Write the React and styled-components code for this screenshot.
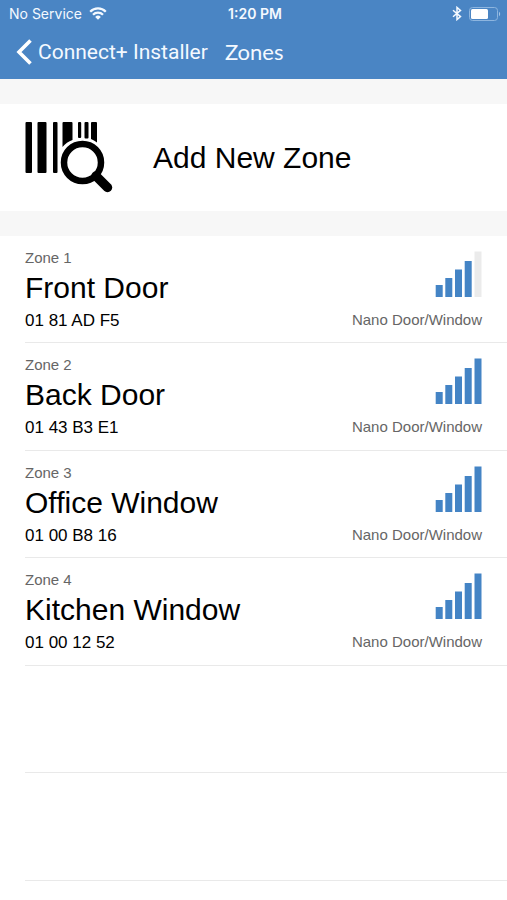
import React from 'react';
import styled, { createGlobalStyle } from 'styled-components';

const colours = {
  primary: '#4a85c4',
  bar: '#4484c5',
  barEmpty: '#ebebeb',
  band: '#f7f7f7',
  divider: '#e9e9e9',
  muted: '#666'
};

const zones = [
  { id: 1, name: 'Front Door', code: '01 81 AD F5', type: 'Nano Door/Window', signal: 4 },
  { id: 2, name: 'Back Door', code: '01 43 B3 E1', type: 'Nano Door/Window', signal: 5 },
  { id: 3, name: 'Office Window', code: '01 00 B8 16', type: 'Nano Door/Window', signal: 5 },
  { id: 4, name: 'Kitchen Window', code: '01 00 12 52', type: 'Nano Door/Window', signal: 5 }
];

const signalBars = [
  { x: 0.7, height: 12 },
  { x: 10.3, height: 19 },
  { x: 20, height: 27.5 },
  { x: 29.7, height: 36 },
  { x: 39.5, height: 45.5 }
];

const GlobalStyle = createGlobalStyle`
  * {
    box-sizing: border-box;
  }
  body {
    margin: 0;
    background: #fff;
    color: #000;
    font-family: 'Liberation Sans', Arial, sans-serif;
  }
`;

const Page = styled.div`
  min-height: 100vh;
  overflow: hidden;
`;

const Header = styled.header`
  background: ${colours.primary};
  color: #f4f9ff;
`;

const StatusBar = styled.div`
  display: grid;
  grid-template-columns: 1fr auto 1fr;
  align-items: center;
  height: 27px;
  padding: 0 6px 0 9px;
  font-family: Inter, sans-serif;
  font-size: 14px;
`;

const StatusGroup = styled.div`
  display: flex;
  align-items: center;
  justify-content: ${({ $end }) => ($end ? 'flex-end' : 'flex-start')};
  gap: 7px;
`;

const Clock = styled.time`
  font-size: 14px;
  font-weight: 600;
`;

const NavBar = styled.nav`
  display: flex;
  align-items: center;
  gap: 17px;
  height: 52px;
  padding: 0 16px 2px;
`;

const BackLink = styled.a`
  display: flex;
  align-items: center;
  gap: 5px;
  color: inherit;
  font-family: Roboto, sans-serif;
  font-size: 21px;
  line-height: 28px;
  text-decoration: none;
`;

const Title = styled.h1`
  margin: 0;
  font-family: Lato, sans-serif;
  font-size: 22px;
  font-weight: 400;
  line-height: 28px;
`;

const Band = styled.div`
  height: 25px;
  background: ${colours.band};
`;

const AddZoneButton = styled.button`
  display: flex;
  align-items: center;
  gap: 40px;
  width: 100%;
  height: 107px;
  padding: 0 25px;
  border: 0;
  background: #fff;
  color: inherit;
  font-family: inherit;
  font-size: 30px;
  line-height: 36px;
  cursor: pointer;
`;

const ZoneList = styled.ul`
  margin: 0;
  padding: 0 0 0 25px;
  list-style: none;
`;

const ZoneRow = styled.li`
  display: flex;
  justify-content: space-between;
  height: 107px;
  padding: 13px 25px 0 0;
  border-bottom: 1px solid ${colours.divider};
  &:nth-child(even) {
    height: 108px;
  }
`;

const ZoneColumn = styled.div`
  display: flex;
  flex-direction: column;
  align-items: ${({ $end }) => ($end ? 'flex-end' : 'flex-start')};
`;

const SmallText = styled.span`
  color: ${colours.muted};
  font-size: 15px;
  line-height: 18px;
`;

const ZoneName = styled.h2`
  margin: 3px 0;
  font-size: 30px;
  font-weight: 400;
  line-height: 36px;
`;

const ZoneCode = styled.span`
  font-size: 17px;
  line-height: 24px;
`;

const SignalIcon = styled.svg`
  margin: 2px 0 14px;
`;

const WifiIcon = () => (
  <svg width="18" height="13" viewBox="0 0 18 13" fill="none" stroke="currentColor" strokeWidth="2.3" aria-hidden="true">
    <path d="M1.2 4.7a11 11 0 0 1 15.6 0" />
    <path d="M4 7.7a7 7 0 0 1 10 0" />
    <path d="M9 12.8 6.2 9.9a4 4 0 0 1 5.6 0z" fill="currentColor" stroke="none" />
  </svg>
);

const BluetoothIcon = () => (
  <svg width="10" height="15" viewBox="0 0 10 15" fill="none" stroke="currentColor" strokeWidth="1.5" aria-hidden="true">
    <path d="M1 4.2 8.500 10.600 5 13.600V1.400L8.500 4.400 1 10.800" />
  </svg>
);

const BatteryIcon = () => (
  <svg width="32" height="14" viewBox="0 0 32 14" aria-hidden="true">
    <rect x="0.5" y="0.5" width="28" height="13" rx="3" fill="none" stroke="#8db5df" />
    <rect x="2" y="2" width="17" height="10" rx="1.5" fill="#fff" />
    <path d="M30 4.800a2.600 2.600 0 0 1 0 4.400z" fill="#a5c5e6" />
  </svg>
);

const BackIcon = () => (
  <svg width="17" height="26" viewBox="0 0 17 26" fill="none" stroke="#fff" strokeWidth="3.6" aria-hidden="true">
    <path d="M14.500 1.500 3 13l11.500 11.500" />
  </svg>
);

const BarcodeSearchIcon = () => (
  <svg width="88" height="71" viewBox="0 0 88 71" aria-hidden="true">
    <rect x="0.5" y="0" width="6.5" height="51" rx="1" />
    <rect x="12.5" y="0" width="9" height="51" rx="1" />
    <rect x="28" y="0" width="4.5" height="51" rx="1" />
    <path d="M38.5 0h8q1 0 1 1v17q-6 2-10 7V1q0-1 1-1z" />
    <rect x="53" y="0" width="3.2" height="16" rx="1" />
    <rect x="59.5" y="0" width="4" height="16.5" rx="1" />
    <path d="M67 0h4q1 0 1 1v19.500q-3-2.500-6-3.500V1q0-1 1-1z" />
    <circle cx="57.500" cy="40.500" r="18.500" fill="none" stroke="#000" strokeWidth="6.500" />
    <path d="M71 54 82.500 65.500" stroke="#000" strokeWidth="9.500" strokeLinecap="round" />
  </svg>
);

const Signal = ({ level }) => (
  <SignalIcon width="47" height="46" viewBox="0 0 47 46" role="img" aria-label={`Signal ${level} of 5`}>
    {signalBars.map(({ x, height }, i) => (
      <rect key={x} x={x} y={46 - height} width="7" height={height} fill={i < level ? colours.bar : colours.barEmpty} />
    ))}
  </SignalIcon>
);

const Zone = ({ zone }) => (
  <ZoneRow>
    <ZoneColumn>
      <SmallText>Zone {zone.id}</SmallText>
      <ZoneName>{zone.name}</ZoneName>
      <ZoneCode>{zone.code}</ZoneCode>
    </ZoneColumn>
    <ZoneColumn $end>
      <Signal level={zone.signal} />
      <SmallText>{zone.type}</SmallText>
    </ZoneColumn>
  </ZoneRow>
);

const App = () => (
  <Page>
    <GlobalStyle />
    <Header>
      <StatusBar>
        <StatusGroup>
          <span>No Service</span>
          <WifiIcon />
        </StatusGroup>
        <Clock>1:20 PM</Clock>
        <StatusGroup $end>
          <BluetoothIcon />
          <BatteryIcon />
        </StatusGroup>
      </StatusBar>
      <NavBar>
        <BackLink href="#installer">
          <BackIcon />
          Connect+ Installer
        </BackLink>
        <Title>Zones</Title>
      </NavBar>
    </Header>
    <main>
      <Band />
      <AddZoneButton type="button">
        <BarcodeSearchIcon />
        Add New Zone
      </AddZoneButton>
      <Band />
      <ZoneList>
        {zones.map((zone) => (
          <Zone key={zone.id} zone={zone} />
        ))}
        <ZoneRow aria-hidden="true" />
        <ZoneRow aria-hidden="true" />
      </ZoneList>
    </main>
  </Page>
);

export default App;
